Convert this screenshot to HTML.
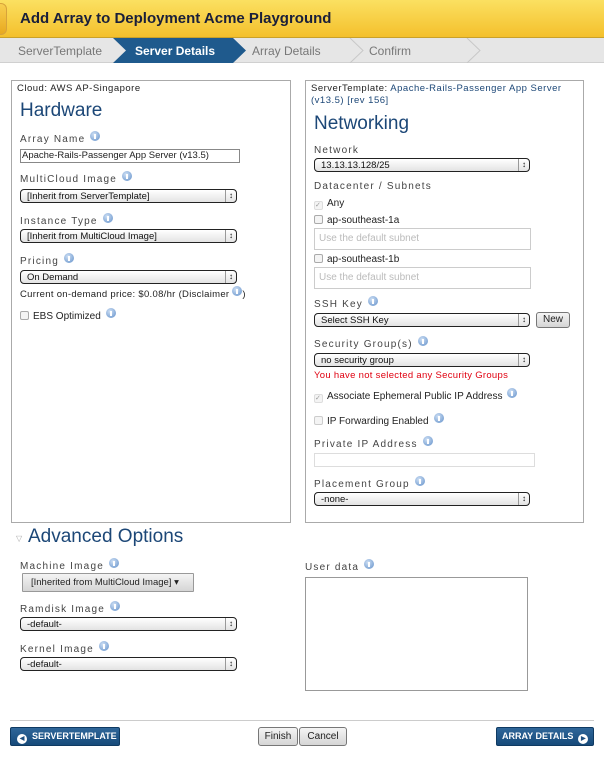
<!DOCTYPE html>
<html><head><style>
*{box-sizing:border-box;margin:0;padding:0}
body{width:604px;height:757px;position:relative;background:#fff;font-family:"Liberation Sans",sans-serif;color:#333;overflow:hidden}
.a{position:absolute;white-space:nowrap;line-height:12px}
.hdr{left:0;top:0;width:604px;height:38px;background:linear-gradient(#fbe061,#f4c02c);border-bottom:1px solid #c9a12a}
.tab{left:0;top:3px;width:7px;height:32px;background:linear-gradient(#f8cf50,#e8a91f);border-radius:0 6px 6px 0;border:1px solid #d7a33b;border-left:none}
.crumb{left:0;top:38px;width:604px;height:25px;background:#e6e6e6;border-bottom:1px solid #d0d0d0}
.ct{font-size:12px;color:#777;top:44px;line-height:14px}
.lbl{font-size:10px;letter-spacing:1.2px;color:#444}
.i{display:inline-block;width:10px;height:10px;border-radius:50%;background:radial-gradient(circle at 40% 35%,#cfe0f5,#5f8ec8);margin-left:5px;vertical-align:top;margin-top:-3px;position:relative}
.i:after{content:"";position:absolute;left:4px;top:3px;width:2px;height:5px;background:#fff}
.sel{height:14px;border:1px solid #222;border-radius:4px;background:linear-gradient(#fff,#e3e3e3);font-size:9.5px;padding-left:6px;line-height:13px;color:#111}
.sel:after{content:"\2195";position:absolute;right:3px;top:0;font-size:8px;border-left:1px solid #999;padding-left:3px;line-height:12px}
.h{font-size:19px;color:#1c4777;line-height:22px}
.cb{display:inline-block;width:9px;height:9px;border:1px solid #aaa;border-radius:2px;background:#f4f4f4;margin-right:4px;vertical-align:-1px}
.t{font-size:10px;color:#222}
.inp{border:1px solid #ccc;background:#fff}
.btn{height:19px;border-radius:2px;background:linear-gradient(#2f6699,#164a7a);color:#fff;font-size:9px;font-weight:bold;line-height:17px;border:1px solid #0f3a62;overflow:hidden}
.gb{height:19px;border:1px solid #777;border-radius:3px;background:linear-gradient(#f4f4f4,#d5d5d5);font-size:10px;text-align:center;line-height:17px;color:#222}
.ci{display:inline-block;width:10px;height:10px;border-radius:50%;background:#fff;vertical-align:-1px;color:#1d4f80;font-size:6px;text-align:center;line-height:10px}
</style></head><body>
<div class="a hdr"></div><div class="a tab"></div>
<div class="a" style="left:20px;top:10px;font-size:15px;line-height:17px;font-weight:bold;color:#1a1f3a">Add Array to Deployment Acme Playground</div>
<div class="a crumb"></div>
<svg class="a" style="left:0;top:38px" width="604" height="25">
<polygon points="113,0 233,0 246,12.5 233,25 113,25 126,12.5" fill="#1f5a8d"/>
<polyline points="350,0 363,12.5 350,25" fill="none" stroke="#c8c8c8"/>
<polyline points="467,0 480,12.5 467,25" fill="none" stroke="#c8c8c8"/>
</svg>
<div class="a ct" style="left:18px">ServerTemplate</div>
<div class="a ct" style="left:135px;color:#fff;font-weight:bold">Server Details</div>
<div class="a ct" style="left:252px">Array Details</div>
<div class="a ct" style="left:369px">Confirm</div>

<div class="a" style="left:11px;top:80px;width:280px;height:443px;border:1px solid #aaa"></div>
<div class="a" style="left:305px;top:80px;width:279px;height:443px;border:1px solid #aaa"></div>

<div class="a t" style="left:17px;top:83px;font-size:9.5px;letter-spacing:.5px">Cloud: AWS AP-Singapore</div>
<div class="a h" style="left:20px;top:100px">Hardware</div>
<div class="a lbl" style="left:20px;top:134px">Array Name<span class="i"></span></div>
<div class="a inp t" style="left:20px;top:149px;width:220px;height:14px;border-color:#888;font-size:9.5px;padding-left:1px;line-height:12px">Apache-Rails-Passenger App Server (v13.5)</div>
<div class="a lbl" style="left:20px;top:174px">MultiCloud Image<span class="i"></span></div>
<div class="a sel" style="left:20px;top:189px;width:217px">[Inherit from ServerTemplate]</div>
<div class="a lbl" style="left:20px;top:216px">Instance Type<span class="i"></span></div>
<div class="a sel" style="left:20px;top:229px;width:217px">[Inherit from MultiCloud Image]</div>
<div class="a lbl" style="left:20px;top:256px">Pricing<span class="i"></span></div>
<div class="a sel" style="left:20px;top:270px;width:217px">On Demand</div>
<div class="a t" style="left:20px;top:289px;font-size:9.5px;letter-spacing:.3px">Current on-demand price: $0.08/hr (Disclaimer<span class="i" style="margin-left:3px"></span>)</div>
<div class="a t" style="left:20px;top:311px"><span class="cb"></span>EBS Optimized<span class="i"></span></div>

<div class="a t" style="left:311px;top:83px;font-size:9.5px;letter-spacing:.5px;line-height:12px">ServerTemplate: <span style="color:#1c4777">Apache-Rails-Passenger App Server<br>(v13.5) [rev 156]</span></div>
<div class="a h" style="left:314px;top:113px">Networking</div>
<div class="a lbl" style="left:314px;top:145px">Network</div>
<div class="a sel" style="left:314px;top:158px;width:216px">13.13.13.128/25</div>
<div class="a lbl" style="left:314px;top:181px">Datacenter / Subnets</div>
<div class="a t" style="left:314px;top:198px"><span class="cb" style="border-color:#ddd;color:#999;font-size:7px;line-height:7px">✓</span>Any</div>
<div class="a t" style="left:314px;top:215px"><span class="cb"></span>ap-southeast-1a</div>
<div class="a inp" style="left:314px;top:228px;width:217px;height:22px;font-size:10px;color:#bbb;padding:4px 4px">Use the default subnet</div>
<div class="a t" style="left:314px;top:254px"><span class="cb"></span>ap-southeast-1b</div>
<div class="a inp" style="left:314px;top:267px;width:217px;height:22px;font-size:10px;color:#bbb;padding:4px 4px">Use the default subnet</div>
<div class="a lbl" style="left:314px;top:299px">SSH Key<span class="i"></span></div>
<div class="a sel" style="left:314px;top:313px;width:216px">Select SSH Key</div>
<div class="a gb" style="left:536px;top:312px;width:34px;height:16px;line-height:14px">New</div>
<div class="a lbl" style="left:314px;top:339px">Security Group(s)<span class="i"></span></div>
<div class="a sel" style="left:314px;top:353px;width:216px">no security group</div>
<div class="a t" style="left:314px;top:370px;color:#e00010;font-size:9.5px;letter-spacing:.3px">You have not selected any Security Groups</div>
<div class="a t" style="left:314px;top:391px"><span class="cb" style="border-color:#ddd;color:#999;font-size:7px;line-height:7px">✓</span>Associate Ephemeral Public IP Address<span class="i"></span></div>
<div class="a t" style="left:314px;top:416px"><span class="cb" style="border-color:#ccc"></span>IP Forwarding Enabled<span class="i"></span></div>
<div class="a lbl" style="left:314px;top:439px">Private IP Address<span class="i"></span></div>
<div class="a inp" style="left:314px;top:453px;width:221px;height:14px;border-color:#ddd"></div>
<div class="a lbl" style="left:314px;top:479px">Placement Group<span class="i"></span></div>
<div class="a sel" style="left:314px;top:492px;width:216px">-none-</div>

<div class="a" style="left:16px;top:533px;font-size:8px;color:#aaa">▽</div>
<div class="a h" style="left:28px;top:526px">Advanced Options</div>
<div class="a lbl" style="left:20px;top:561px">Machine Image<span class="i"></span></div>
<div class="a gb" style="left:22px;top:573px;width:172px;border-radius:1px;border-color:#999;text-align:left;padding-left:8px;font-size:9.5px">[Inherited from MultiCloud Image] ▾</div>
<div class="a lbl" style="left:20px;top:604px">Ramdisk Image<span class="i"></span></div>
<div class="a sel" style="left:20px;top:617px;width:217px">-default-</div>
<div class="a lbl" style="left:20px;top:644px">Kernel Image<span class="i"></span></div>
<div class="a sel" style="left:20px;top:657px;width:217px">-default-</div>
<div class="a lbl" style="left:305px;top:562px">User data<span class="i"></span></div>
<div class="a" style="left:305px;top:577px;width:223px;height:114px;border:1px solid #999"></div>

<div class="a" style="left:10px;top:720px;width:584px;height:1px;background:#ccc"></div>
<div class="a btn" style="left:10px;top:727px;width:110px;padding-left:6px"><span class="ci">◀</span>&nbsp; SERVERTEMPLATE</div>
<div class="a gb" style="left:258px;top:727px;width:40px">Finish</div>
<div class="a gb" style="left:299px;top:727px;width:48px">Cancel</div>
<div class="a btn" style="left:496px;top:727px;width:98px;padding-left:5px">ARRAY DETAILS &nbsp;<span class="ci">▶</span></div>
</body></html>
